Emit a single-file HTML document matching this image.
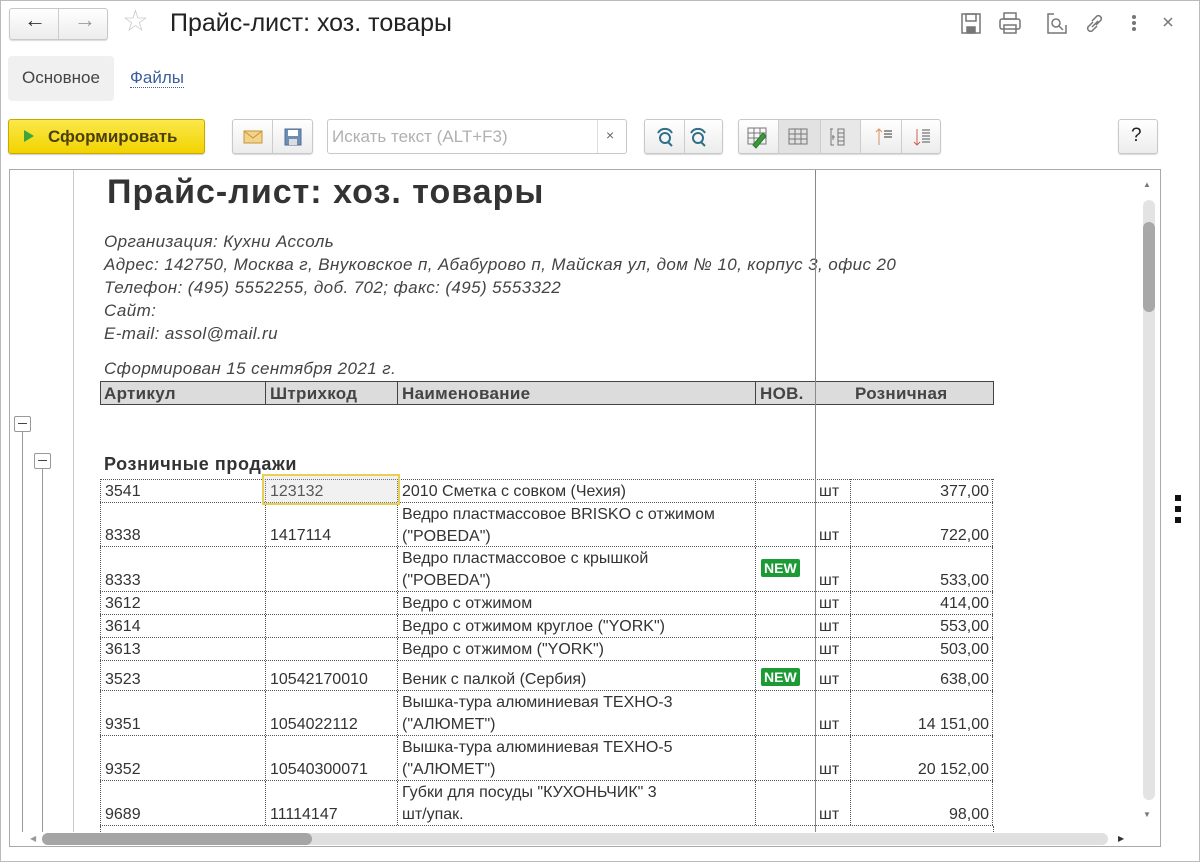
<!DOCTYPE html>
<html><head><meta charset="utf-8"><style>
*{box-sizing:border-box;margin:0;padding:0}
body{width:1200px;height:862px;overflow:hidden;background:#fff;font-family:"Liberation Sans",Arial,sans-serif;position:relative;color:#333}
.a{position:absolute}
.btn{position:absolute;border:1px solid #c8c8c8;border-radius:3px;background:linear-gradient(#fff,#ececec);box-shadow:0 1px 1px rgba(0,0,0,.15)}
.it{font-style:italic;font-size:17px;letter-spacing:0.4px;color:#444;position:absolute;left:104px;white-space:nowrap}
.row{position:absolute;left:100px;width:893px;border-bottom:1px dotted #555;font-size:16px;color:#333}
.c{position:absolute;top:0;bottom:0;border-left:1px dotted #555;padding-left:4px;white-space:nowrap}
.c.b{display:flex;align-items:flex-end;padding-bottom:1px}
.new{background:#1c9a35;color:#fff;font-weight:bold;font-size:14px;padding:1px 3px;border-radius:2px;line-height:16px}
</style></head><body>
<div class="a" style="left:0;top:0;width:1200px;height:862px;border:1px solid #bbb"></div>
<div class="btn" style="left:9px;top:8px;width:99px;height:32px"></div>
<div class="a" style="left:58px;top:9px;width:1px;height:30px;background:#ccc"></div>
<div class="a" style="left:24px;top:7px;font-size:22px;color:#333">&#8592;</div>
<div class="a" style="left:74px;top:7px;font-size:22px;color:#999">&#8594;</div>
<div class="a" style="left:122px;top:4px;font-size:30px;color:#ccc">&#9734;</div>
<div class="a" style="left:170px;top:9px;font-size:25px;color:#222">Прайс-лист: хоз. товары</div>
<svg class="a" style="left:955px;top:10px" width="220" height="28" fill="none" stroke="#777" stroke-width="1.5">
<rect x="7" y="4" width="18" height="19"/><rect x="11" y="4" width="10" height="7"/><rect x="12" y="17" width="8" height="6" fill="#777"/>
<rect x="49" y="3" width="12" height="6"/><rect x="45" y="9" width="20" height="10" rx="2"/><rect x="49" y="15" width="12" height="8"/>
<path d="M99 4h-6v19h18v-8"/><circle cx="101" cy="13" r="4"/><path d="M104 16l4 4"/>
<path d="M138 12l-5 5a3 3 0 0 0 4 4l5-5M141 15l5-5a3 3 0 0 0-4-4l-5 5M137 17l6-6"/>
<circle cx="179" cy="7" r="1.3" fill="#777"/><circle cx="179" cy="13" r="1.3" fill="#777"/><circle cx="179" cy="19" r="1.3" fill="#777"/>
<path d="M209 8l8 8M217 8l-8 8"/>
</svg>
<div class="a" style="left:8px;top:56px;width:106px;height:45px;background:#f0f0f0;border-radius:4px"></div>
<div class="a" style="left:22px;top:68px;font-size:17px;color:#444">Основное</div>
<div class="a" style="left:130px;top:68px;font-size:17px;color:#3c5f9c;border-bottom:1px dotted #3c5f9c;line-height:19px">Файлы</div>
<div class="a" style="left:8px;top:119px;width:197px;height:35px;border:1px solid #c9a800;border-radius:3px;background:linear-gradient(#fbe84a,#f2d300);box-shadow:0 1px 1px rgba(0,0,0,.2)"></div>
<div class="a" style="left:24px;top:130px;width:0;height:0;border-left:10px solid #3ca63c;border-top:6px solid transparent;border-bottom:6px solid transparent"></div>
<div class="a" style="left:48px;top:127px;font-size:17px;font-weight:bold;color:#4a3f10">Сформировать</div>
<div class="btn" style="left:232px;top:119px;width:81px;height:35px"></div>
<div class="a" style="left:272px;top:120px;width:1px;height:33px;background:#ccc"></div>
<svg class="a" style="left:242px;top:128px" width="64" height="18"><rect x="2" y="3" width="18" height="12" fill="#f3d28a" stroke="#c49536"/><path d="M2 3l9 7 9-7" fill="none" stroke="#c49536"/><rect x="43" y="1" width="16" height="16" fill="#6d8fb5" stroke="#4f6e92"/><rect x="46" y="2" width="10" height="6" fill="#fff"/><rect x="47" y="11" width="8" height="6" fill="#ddd"/></svg>
<div class="a" style="left:327px;top:119px;width:300px;height:35px;border:1px solid #c8c8c8;border-radius:3px;background:#fff"></div>
<div class="a" style="left:332px;top:127px;font-size:17px;color:#b0b0b0">Искать текст (ALT+F3)</div>
<div class="a" style="left:597px;top:120px;width:1px;height:33px;background:#ddd"></div>
<div class="a" style="left:606px;top:127px;font-size:14px;color:#666">×</div>
<div class="btn" style="left:644px;top:119px;width:79px;height:35px"></div>
<div class="a" style="left:684px;top:120px;width:1px;height:33px;background:#ccc"></div>
<svg class="a" style="left:652px;top:125px" width="66" height="24" fill="none" stroke="#2f6f8a" stroke-width="2"><circle cx="13" cy="13" r="5"/><path d="M16 17l4 4M6 8a8 8 0 0 1 14 0"/><circle cx="46" cy="13" r="5"/><path d="M49 17l4 4M39 8a8 8 0 0 1 14 0"/></svg>
<div class="btn" style="left:738px;top:119px;width:203px;height:35px"></div>
<div class="a" style="left:779px;top:120px;width:42px;height:33px;background:#e2e2e2"></div>
<div class="a" style="left:821px;top:120px;width:40px;height:33px;background:#e8e8e8"></div>
<div class="a" style="left:778px;top:120px;width:1px;height:33px;background:#ccc"></div>
<div class="a" style="left:820px;top:120px;width:1px;height:33px;background:#ccc"></div>
<div class="a" style="left:860px;top:120px;width:1px;height:33px;background:#ccc"></div>
<div class="a" style="left:901px;top:120px;width:1px;height:33px;background:#ccc"></div>
<svg class="a" style="left:745px;top:125px" width="195" height="24" fill="none" stroke="#777">
<rect x="3" y="3" width="18" height="16"/><path d="M3 8h18M3 13h18M9 3v16M15 3v16"/><path d="M8 20l10-12 3 3-10 12z" fill="#3a9a3a" stroke="#2a7a2a"/>
<rect x="44" y="4" width="18" height="15"/><path d="M44 9h18M44 14h18M50 4v15M56 4v15"/>
<path d="M85 4h3M86 4v16h3M87 12h3M88 10v5" /><rect x="93" y="4" width="6" height="16"/><path d="M93 8h6M93 12h6M93 16h6"/>
<path d="M134 20V4M131 7l3-3 3 3" stroke="#d89060"/><path d="M139 6h8M139 9h8M139 12h8" stroke="#333"/>
<path d="M172 4v16M169 17l3 3 3-3" stroke="#d06050"/><path d="M177 5h8M177 8h8M177 11h8M177 14h8M177 17h8" stroke="#555"/>
</svg>
<div class="btn" style="left:1118px;top:119px;width:40px;height:35px"></div>
<div class="a" style="left:1131px;top:125px;font-size:19px;color:#222">?</div>
<div class="a" style="left:9px;top:169px;width:1152px;height:678px;border:1px solid #aaa"></div>
<div class="a" style="left:73px;top:170px;width:1px;height:662px;background:#ccc"></div>
<div class="a" style="left:22px;top:432px;width:1px;height:400px;background:#999"></div>
<div class="a" style="left:42px;top:469px;width:1px;height:363px;background:#999"></div>
<div class="a" style="left:14px;top:416px;width:17px;height:16px;border:1px solid #999;border-radius:2px;background:#fff"><div style="margin:6px 3px;height:1px;background:#444"></div></div>
<div class="a" style="left:34px;top:453px;width:17px;height:16px;border:1px solid #999;border-radius:2px;background:#fff"><div style="margin:6px 3px;height:1px;background:#444"></div></div>
<div class="a" style="left:107px;top:173px;font-size:34px;letter-spacing:1px;font-weight:bold;color:#333">Прайс-лист: хоз. товары</div>
<div class="it" style="top:232px">Организация: Кухни Ассоль</div>
<div class="it" style="top:255px">Адрес: 142750, Москва г, Внуковское п, Абабурово п, Майская ул, дом № 10, корпус 3, офис 20</div>
<div class="it" style="top:278px">Телефон: (495) 5552255, доб. 702; факс: (495) 5553322</div>
<div class="it" style="top:301px">Сайт:</div>
<div class="it" style="top:324px">E-mail: assol@mail.ru</div>
<div class="it" style="top:359px">Сформирован 15 сентября 2021 г.</div>
<div class="a" style="left:100px;top:381px;width:894px;height:24px;background:#dcdcdc;border:1px solid #444;font-weight:bold;font-size:17px;letter-spacing:0.3px;color:#444">
<div class="a" style="left:3px;top:2px">Артикул</div>
<div class="a" style="left:164px;top:0;bottom:0;border-left:1px solid #444;padding:2px 4px">Штрихкод</div>
<div class="a" style="left:296px;top:0;bottom:0;border-left:1px solid #444;padding:2px 4px">Наименование</div>
<div class="a" style="left:654px;top:0;bottom:0;border-left:1px solid #444;padding:2px 4px">НОВ.</div>
<div class="a" style="left:754px;top:2px">Розничная</div>
</div>
<div class="a" style="left:104px;top:454px;font-size:18px;letter-spacing:0.6px;font-weight:bold;color:#333">Розничные продажи</div>
<div class="a" style="left:100px;top:479px;width:894px;height:1px;border-top:1px dotted #555"></div>
<div id="rows"></div>
<script>
var R=[[479,503,"3541","123132",["2010 Сметка с совком (Чехия)"],0,"377,00"],
[503,547,"8338","1417114",["Ведро пластмассовое BRISKO с отжимом","(\"POBEDA\")"],0,"722,00"],
[547,592,"8333","",["Ведро пластмассовое с крышкой","(\"POBEDA\")"],1,"533,00"],
[592,615,"3612","",["Ведро с отжимом"],0,"414,00"],
[615,638,"3614","",["Ведро с отжимом  круглое (\"YORK\")"],0,"553,00"],
[638,661,"3613","",["Ведро с отжимом (\"YORK\")"],0,"503,00"],
[661,691,"3523","10542170010",["Веник с палкой (Сербия)"],1,"638,00"],
[691,736,"9351","1054022112",["Вышка-тура алюминиевая ТЕХНО-3","(\"АЛЮМЕТ\")"],0,"14 151,00"],
[736,781,"9352","10540300071",["Вышка-тура алюминиевая ТЕХНО-5","(\"АЛЮМЕТ\")"],0,"20 152,00"],
[781,826,"9689","11114147",["Губки для посуды \"КУХОНЬЧИК\" 3","шт/упак."],0,"98,00"]];
var h="";
R.forEach(function(r){var H=r[1]-r[0];
var nm=r[4].length>1?'<div style="position:absolute;top:1px;left:4px;line-height:22px">'+r[4].join("<br>")+'</div>':r[4][0];
h+='<div class="row" style="top:'+r[0]+'px;height:'+H+'px">'+
'<div class="c b" style="left:0;width:165px">'+r[2]+'</div>'+
'<div class="c b" style="left:165px;width:132px">'+r[3]+'</div>'+
'<div class="c '+(r[4].length>1?'':'b')+'" style="left:297px;width:358px">'+nm+'</div>'+
'<div class="c" style="left:655px;width:60px">'+(r[5]?'<span class="new" style="position:absolute;left:5px;top:'+(H>30?12:7)+'px">NEW</span>':'')+'</div>'+
'<div class="c b" style="left:715px;width:35px;border-left:none">шт</div>'+
'<div class="c b" style="left:750px;width:143px;justify-content:flex-end;padding-right:3px;border-right:1px dotted #555">'+r[6]+'</div></div>';});
document.getElementById("rows").innerHTML=h;
</script>
<div class="a" style="left:100px;top:826px;width:894px;height:6px;border-left:1px dotted #555;border-right:1px dotted #555"></div>
<div class="a" style="left:262px;top:474px;width:138px;height:31px;border:2px solid #e8cf55;background:rgba(200,200,200,.25)"></div>
<div class="a" style="left:815px;top:170px;width:1px;height:662px;background:#888"></div>
<div class="a" style="left:1143px;top:180px;font-size:8px;color:#777">▲</div>
<div class="a" style="left:1143px;top:200px;width:12px;height:600px;background:#e3e3e3;border-radius:6px"></div>
<div class="a" style="left:1143px;top:222px;width:12px;height:90px;background:#a8a8a8;border-radius:6px"></div>
<div class="a" style="left:1143px;top:810px;font-size:8px;color:#777">▼</div>
<div class="a" style="left:30px;top:834px;font-size:8px;color:#999">◀</div>
<div class="a" style="left:42px;top:833px;width:1066px;height:12px;background:#e0e0e0;border-radius:6px"></div>
<div class="a" style="left:42px;top:833px;width:270px;height:12px;background:#a5a5a5;border-radius:6px"></div>
<div class="a" style="left:1118px;top:834px;font-size:8px;color:#333">▶</div>
<div class="a" style="left:1175px;top:495px;width:6px;height:6px;background:#111"></div>
<div class="a" style="left:1175px;top:506px;width:6px;height:6px;background:#111"></div>
<div class="a" style="left:1175px;top:517px;width:6px;height:6px;background:#111"></div>
</body></html>
